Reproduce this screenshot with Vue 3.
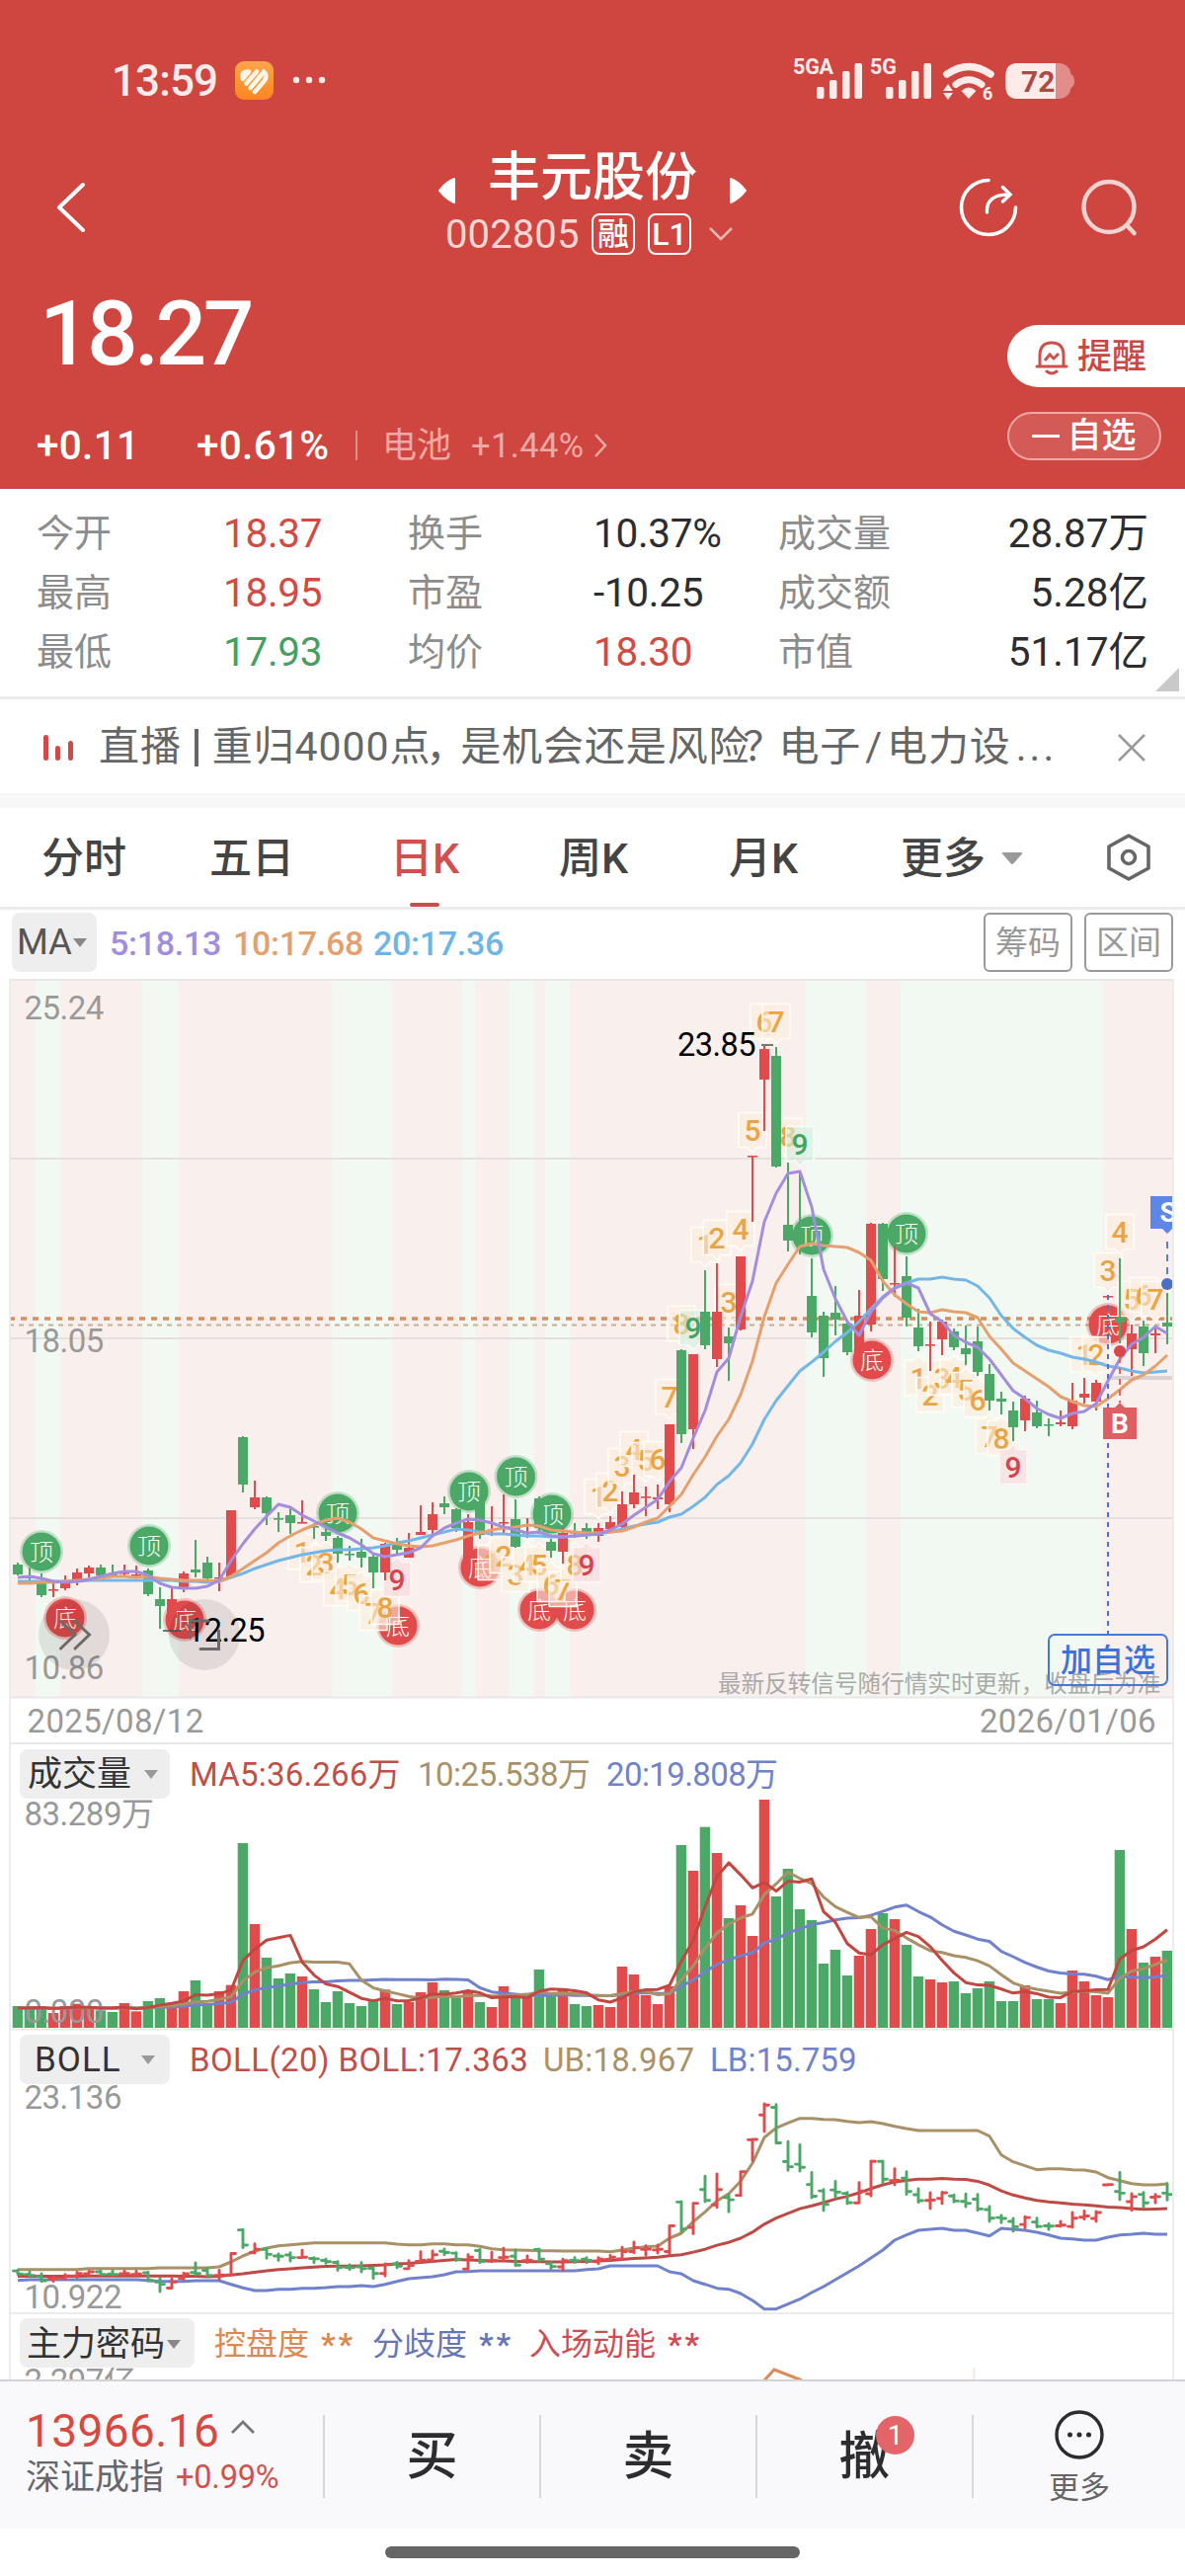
<script setup>
// Daily candles: [up/down, high, low, body top, body bottom, volume]
const raw = `G 1582 1595 1584 1594 66|G 1587 1600 1595 1598 63|G 1593 1617 1602 1615 63|R 1603 1617 1609 1610 45|R 1595 1610 1600 1608 66|R 1588 1605 1592 1600 73|R 1585 1597 1587 1593 63|G 1584 1595 1587 1595 53|G 1584 1597 1594 1595 48|R 1584 1597 1592 1593 75|R 1585 1598 1594 1595 50|G 1588 1616 1590 1614 81|G 1607 1649 1619 1626 90|R 1608 1638 1619 1638 75|R 1591 1612 1593 1608 111|G 1559 1597 1589 1592 144|G 1576 1600 1582 1598 75|R 1582 1611 1597 1598 111|R 1529 1597 1529 1597 130|G 1454 1511 1455 1503 561|R 1499 1528 1516 1526 315|G 1515 1544 1516 1532 213|G 1531 1551 1537 1538 150|G 1527 1553 1534 1542 165|R 1519 1542 1541 1542 156|G 1542 1558 1545 1546 117|G 1547 1560 1551 1555 78|G 1555 1582 1557 1573 111|G 1565 1580 1573 1574 75|G 1558 1587 1571 1577 66|G 1573 1608 1576 1592 81|R 1562 1600 1563 1592 116|G 1557 1574 1562 1569 72|R 1552 1577 1567 1577 78|R 1524 1554 1551 1554 108|R 1521 1553 1533 1549 138|G 1515 1533 1522 1526 114|G 1527 1551 1528 1547 90|R 1533 1577 1541 1578 111|G 1517 1558 1520 1554 78|R 1525 1555 1552 1553 63|R 1513 1552 1541 1542 126|G 1518 1567 1538 1566 93|R 1537 1557 1551 1552 96|G 1515 1553 1517 1547 177|G 1558 1577 1561 1570 96|R 1547 1583 1552 1571 120|G 1542 1557 1551 1552 72|G 1542 1558 1547 1551 66|R 1542 1561 1547 1555 69|R 1535 1550 1541 1548 63|R 1510 1547 1523 1546 186|R 1493 1527 1511 1523 162|R 1505 1535 1515 1516 99|R 1503 1528 1516 1518 72|R 1442 1531 1442 1523 126|G 1366 1461 1367 1452 555|R 1371 1467 1371 1447 477|G 1286 1366 1328 1362 610|R 1279 1384 1328 1376 531|G 1344 1398 1353 1360 333|R 1272 1347 1272 1346 372|R 1170 1237 1170 1171 279|R 1058 1145 1062 1093 693|G 1060 1182 1069 1181 399|G 1177 1267 1240 1256 483|G 1187 1270 1248 1258 360|G 1274 1354 1312 1349 327|G 1328 1394 1332 1375 195|G 1302 1352 1329 1336 237|G 1337 1372 1340 1369 159|R 1306 1370 1332 1370 219|R 1238 1348 1239 1341 300|G 1238 1307 1239 1295 348|R 1262 1313 1299 1300 330|G 1272 1343 1292 1334 252|G 1325 1368 1344 1363 156|R 1338 1388 1361 1362 147|R 1336 1372 1338 1356 138|G 1345 1367 1348 1364 141|G 1342 1382 1365 1371 105|G 1343 1393 1358 1389 120|G 1381 1428 1391 1418 141|G 1409 1432 1416 1419 81|G 1419 1459 1428 1445 81|R 1413 1449 1416 1438 129|G 1418 1446 1430 1444 87|G 1436 1454 1442 1443 87|R 1428 1444 1440 1442 75|R 1400 1447 1418 1444 174|R 1395 1421 1411 1415 141|R 1397 1428 1400 1419 99|R 1312 1313 1312 1313 93|G 1274 1360 1334 1339 540|R 1341 1393 1350 1366 300|G 1337 1383 1343 1370 198|R 1343 1370 1350 1352 216|G 1309 1361 1339 1343 234`
const X = i => 18 + 12 * i
const RED = '#e14b4b'
const GREEN = '#4ca866'
const candles = raw.split('|').map((r, i) => {
  const [c, ...n] = r.split(' ')
  const [h, l, t, b, v] = n.map(Number)
  return { x: X(i), red: c === 'R', color: c === 'R' ? RED : GREEN, h, l, t, b, v: v / 3, bh: Math.max(b - t, 1.6) }
})

const nums = s => s.trim().split(/\s+/).map(Number)
const line = (a, f = y => y) => a.map((y, i) => `${X(i)},${f(y).toFixed(1)}`).join(' ')

const ma5 = nums(`1597 1596 1598 1601 1602 1601 1599 1596 1593 1591 1591 1595 1603 1607 1608 1608 1606 1600 1580 1563 1548 1535 1523 1526 1534 1540 1546 1552 1557 1564 1573 1576 1574 1572 1567 1555 1547 1542 1538 1539 1542 1546 1549 1552 1551 1555 1556 1555 1554 1553 1549 1543 1534 1526 1518 1500 1486 1456 1428 1389 1375 1333 1297 1237 1208 1188 1186 1222 1285 1315 1338 1352 1328 1314 1304 1299 1304 1330 1338 1352 1359 1364 1376 1392 1408 1416 1426 1432 1436 1431 1429 1421 1398 1376 1361 1354 1343 1350`)
const ma10 = nums(`1603 1603 1602 1602 1601 1600 1599 1598 1596 1596 1597 1596 1598 1599 1600 1600 1600 1601 1596 1588 1580 1572 1562 1555 1549 1544 1539 1537 1541 1548 1557 1560 1563 1565 1566 1565 1562 1559 1555 1552 1549 1547 1546 1544 1545 1549 1550 1551 1552 1552 1551 1550 1546 1541 1537 1525 1513 1493 1475 1454 1437 1412 1378 1333 1299 1280 1262 1259 1261 1262 1263 1268 1276 1297 1311 1320 1328 1329 1326 1328 1329 1334 1353 1366 1380 1388 1396 1404 1414 1419 1423 1424 1416 1407 1397 1392 1383 1372`)
const ma20 = nums(`1601 1601 1601 1601 1601 1601 1600 1600 1600 1600 1600 1600 1600 1600 1601 1601 1602 1601 1597 1593 1588 1584 1580 1577 1574 1572 1570 1569 1569 1568 1567 1565 1562 1560 1557 1554 1551 1548 1549 1551 1553 1553 1554 1555 1555 1556 1556 1555 1554 1553 1551 1548 1545 1543 1541 1536 1533 1525 1516 1503 1494 1481 1462 1437 1418 1403 1388 1379 1369 1358 1349 1338 1325 1313 1304 1299 1295 1295 1293 1295 1296 1302 1314 1332 1345 1354 1362 1367 1370 1374 1376 1379 1383 1385 1388 1390 1389 1388`)
const ub = nums(`713 713 713 713 713 713 710 710 710 710 710 710 708 708 708 708 708 705 690 672 657 648 641 638 635 632 632 632 632 632 632 632 636 638 638 635 635 638 638 643 650 653 654 655 656 656 657 657 657 657 659 654 648 644 642 618 603 568 538 505 483 445 390 312 283 268 254 254 257 258 263 267 264 270 278 285 291 291 291 291 291 291 308 365 386 398 410 407 407 410 411 417 434 443 452 456 456 453`)
const lb = nums(`746 744 744 744 744 744 744 744 744 744 744 746 749 749 749 747 747 747 758 769 777 777 773 773 770 770 768 765 765 762 765 758 749 741 738 735 729 720 719 717 717 717 717 717 717 717 717 717 713 711 702 702 702 702 702 720 726 747 758 770 773 786 807 833 833 818 803 783 765 744 723 702 678 654 624 608 594 591 588 594 594 602 611 588 591 594 600 608 618 620 624 624 615 608 606 603 606 606`)

const by = y => 2130 + (y - 1058) * 0.3215
const bollY = v => 2060 + v / 3

const padded = [...Array(20).fill(19.5), ...candles.map(c => c.v)]
const volMa = n => candles.map((_, i) => {
  const w = padded.slice(i + 21 - n, i + 21)
  return 2053 - w.reduce((a, b) => a + b, 0) / n
})

const bands = [[36, 61], [144.5, 181], [336.5, 397], [468, 481], [516, 541], [552, 577], [816, 877], [912, 1117]]
const grid = [1173, 1355, 1537]

const signals = [
  ['顶', 42, 1571], ['顶', 151, 1565], ['顶', 342, 1532], ['顶', 475, 1510], ['顶', 522.5, 1495], ['顶', 559, 1533],
  ['顶', 822, 1251], ['顶', 918, 1249], ['底', 66, 1638], ['底', 187, 1640], ['底', 403, 1646], ['底', 486, 1587],
  ['底', 546, 1630], ['底', 582, 1630], ['底', 883, 1377], ['底', 1122, 1341]
]

// Sequence counts: [candle index, count, box centre y, side]
const tags = [
  [24, 1, 1571, 'b'], [25, 2, 1584, 'b'], [26, 3, 1582, 'b'], [27, 4, 1608, 'b'], [28, 5, 1604, 'b'], [29, 6, 1613, 'b'], [30, 7, 1633, 'b'], [31, 8, 1627, 'b'], [32, 9, 1599, 'b'],
  [40, 1, 1582, 'b'], [41, 2, 1575, 'b'], [42, 3, 1594, 'b'], [43, 4, 1584, 'b'], [44, 5, 1584, 'b'], [45, 6, 1604, 'b'], [46, 7, 1609, 'b'], [47, 8, 1584, 'b'], [48, 9, 1584, 'b'],
  [49, 1, 1515, 't'], [50, 2, 1509, 't'], [51, 3, 1484, 't'], [52, 4, 1467, 't'], [53, 5, 1478, 't'], [54, 6, 1477, 't'], [55, 7, 1414, 't'], [56, 8, 1340, 't'], [57, 9, 1344, 't'],
  [58, 1, 1260, 't'], [59, 2, 1253, 't'], [60, 3, 1318, 't'], [61, 4, 1244, 't'], [62, 5, 1144, 't'], [63, 6, 1034, 't'], [64, 7, 1034, 't'], [65, 8, 1150, 't'], [66, 9, 1158, 't'],
  [76, 1, 1395, 'b'], [77, 2, 1412, 'b'], [78, 3, 1395, 'b'], [79, 4, 1394, 'b'], [80, 5, 1407, 'b'], [81, 6, 1417, 'b'], [82, 7, 1454, 'b'], [83, 8, 1456, 'b'], [84, 9, 1485, 'b'],
  [90, 1, 1371, 't'], [91, 2, 1371, 't'], [92, 3, 1286, 't'], [93, 4, 1247, 't'], [94, 5, 1315, 't'], [95, 6, 1311, 't'], [96, 7, 1315, 't']
].map(([i, n, y, side]) => ({
  x: X(i), n, y,
  kind: n === 9 ? (side === 't' ? 'tag-green' : 'tag-red') : 'tag-orange',
  d: side === 't'
    ? 'M-14,-17.5 H14 V17.5 H5 L0,22.5 L-5,17.5 H-14 Z'
    : 'M-14,-17.5 H-5 L0,-22.5 L5,-17.5 H14 V17.5 H-14 Z'
}))

const stats = [
  ['今开', '18.37', 'up'], ['换手', '10.37%', ''], ['成交量', '28.87万', ''],
  ['最高', '18.95', 'up'], ['市盈', '-10.25', ''], ['成交额', '5.28亿', ''],
  ['最低', '17.93', 'down'], ['均价', '18.30', 'up'], ['市值', '51.17亿', '']
]
const tabs = ['分时', '五日', '日K', '周K', '月K']
</script>

<template>
  <div class="page">
    <header class="hero">
      <div class="status">
        <span class="clock">13:59</span>
        <svg class="app-ico" width="39" height="39" viewBox="0 0 39 39">
          <defs><linearGradient id="og" x1="0" y1="0" x2="0" y2="1"><stop offset="0" stop-color="#fda54b" /><stop offset="1" stop-color="#fb861f" /></linearGradient></defs>
          <rect width="39" height="39" rx="9" fill="url(#og)" />
          <g fill="none" stroke="#fff6e8" stroke-width="4.600" stroke-linecap="round" stroke-linejoin="round">
            <path d="M8 18 Q5.500 10 14 10.500 L9 16.500" /><path d="M11.500 22.500 L22 10.500" /><path d="M15.500 27 L27 13.500" /><path d="M20 31 L29.500 20 Q33.500 14 29 10.500" />
          </g>
        </svg>
        <svg class="dots" width="34" height="8" viewBox="0 0 34 8" fill="#fde9e7"><circle cx="4" cy="4" r="3.2" /><circle cx="17" cy="4" r="3.2" /><circle cx="30" cy="4" r="3.2" /></svg>
        <svg class="net" width="290" height="50" viewBox="802 55 290 50" fill="#fdebea">
          <text x="804" y="74" class="net-t">5GA</text>
          <rect x="828" y="87" width="7.5" height="12" rx="2" /><rect x="841" y="80" width="7.5" height="19" rx="2" /><rect x="854" y="71" width="7.5" height="28" rx="2" /><rect x="866.5" y="63" width="7.5" height="36" rx="2" />
          <text x="882" y="74" class="net-t">5G</text>
          <rect x="898" y="87" width="7.5" height="12" rx="2" /><rect x="911" y="80" width="7.5" height="19" rx="2" /><rect x="924" y="71" width="7.5" height="28" rx="2" /><rect x="936.5" y="63" width="7.5" height="36" rx="2" />
          <path d="M960 74 Q982 59 1004 74" fill="none" stroke="#fdebea" stroke-width="7.5" stroke-linecap="round" />
          <path d="M969 84.500 Q982 75 995 84.500" fill="none" stroke="#fdebea" stroke-width="7" stroke-linecap="round" />
          <path d="M974.500 91 Q982 84 989.500 91 L982 99 Z" />
          <path d="M956 91 L961 84 L966 91 Z M956 93 L961 100 L966 93 Z" />
          <text x="996" y="99.500" class="wifi-t">6</text>
          <rect x="1019.500" y="63" width="66" height="36" rx="12" fill="#e28d89" />
          <path d="M1085 74 q4 1 4 7 q0 6 -4 7 z" fill="#e28d89" />
          <path d="M1031.500 63 H1070 V99 H1031.500 Q1019.500 99 1019.500 87 V75 Q1019.500 63 1031.500 63 Z" />
          <text x="1035" y="92" class="bat-t">72</text>
        </svg>
      </div>

      <div class="nav">
        <svg class="back" width="34" height="52" viewBox="0 0 34 52"><path d="M29 3 L5 26 L29 49" fill="none" stroke="#fff" stroke-width="4" stroke-linecap="round" stroke-linejoin="round" /></svg>
        <div class="title">
          <div class="name">
            <svg width="20" height="28" viewBox="0 0 20 28"><path d="M17 2 V26 Q9 23 2 14 Q9 5 17 2 Z" fill="#fff" stroke="#fff" stroke-width="2" stroke-linejoin="round" /></svg>
            <h1>丰元股份</h1>
            <svg width="20" height="28" viewBox="0 0 20 28"><path d="M3 2 V26 Q11 23 18 14 Q11 5 3 2 Z" fill="#fff" stroke="#fff" stroke-width="2" stroke-linejoin="round" /></svg>
          </div>
          <div class="code">
            <span>002805</span><i>融</i><i class="l1">L1</i>
            <svg width="26" height="16" viewBox="0 0 26 16"><path d="M2 2 L13 13 L24 2" fill="none" stroke="#f2b8b4" stroke-width="2.500" /></svg>
          </div>
        </div>
        <svg class="tools" width="190" height="66" viewBox="970 178 190 66" fill="none" stroke-linecap="round">
          <path d="M1001 182.500 A27.500 27.500 0 1 0 1028.500 210" stroke="#fff" stroke-width="3.600" />
          <path d="M999.500 215 V213 Q999.500 197 1022 197 M1015.500 189.500 L1023 197 L1015.500 204" stroke="#fff" stroke-width="3.400" />
          <circle cx="1123" cy="209.500" r="25.500" stroke="#f3d3d1" stroke-width="4.500" />
          <path d="M1141 228 L1148.500 236" stroke="#f3d3d1" stroke-width="4.500" />
        </svg>
      </div>

      <div class="quote">
        <div class="last">18.27</div>
        <button class="remind">
          <svg width="36" height="36" viewBox="0 0 36 36" fill="none" stroke="#cf4f4a" stroke-width="3"><path d="M3 27 H33 M6 27 V16 Q6 3 18 3 Q30 3 30 16 V27" stroke-linecap="round" /><path d="M11 21 L16 15 L20 19 L25 14" /><path d="M13 32 Q18 36 23 32" stroke-linecap="round" /></svg>
          <span>提醒</span>
        </button>
      </div>
      <div class="delta">
        <span class="d1">+0.11</span><span class="d2">+0.61%</span><b></b><span class="d3">电池</span><span class="d4">+1.44%</span>
        <svg width="16" height="26" viewBox="0 0 16 26"><path d="M3 2 L13 13 L3 24" fill="none" stroke="#efa9a5" stroke-width="2.500" /></svg>
        <button class="fav"><em></em>自选</button>
      </div>
    </header>

    <section class="stats">
      <template v-for="(s, i) in stats" :key="i">
        <span class="k">{{ s[0] }}</span><span class="v" :class="[s[2], { end: i % 3 === 2 }]">{{ s[1] }}</span>
      </template>
      <svg class="corner" width="24" height="24" viewBox="0 0 24 24"><path d="M24 0 V24 H0 Z" fill="#c9c9c9" /></svg>
    </section>

    <section class="news">
      <svg width="34" height="30" viewBox="0 0 34 30" fill="#cf4a48"><rect x="1" y="2" width="5" height="26" rx="2.500" /><rect x="13" y="13" width="5" height="15" rx="2.500" /><rect x="26" y="8" width="5" height="20" rx="2.500" /></svg>
      <p>直播<i></i>重归4000点<span class="comma">，</span>是机会还是风险<span class="ques">？</span>电子<span class="sl">/</span>电力设<span class="el">...</span></p>
      <svg class="x" width="30" height="30" viewBox="0 0 30 30"><path d="M2 2 L28 28 M28 2 L2 28" stroke="#999" stroke-width="2.600" /></svg>
    </section>

    <nav class="tabs">
      <a v-for="t in tabs" :key="t" :class="{ on: t === '日K' }">{{ t }}</a>
      <a>更多<svg width="22" height="14" viewBox="0 0 22 14"><path d="M2 1 H20 Q22 1 20.500 3 L12.500 12 Q11 14 9.500 12 L1.500 3 Q0 1 2 1Z" fill="#999" /></svg></a>
      <svg class="hex" width="46" height="50" viewBox="0 0 46 50" fill="none" stroke="#666" stroke-width="3.600" stroke-linejoin="round"><path d="M23 3 L43 14 V36 L23 47 L3 36 V14 Z" /><circle cx="23" cy="25" r="6.500" /></svg>
    </nav>

    <div class="ma">
      <span class="pill">MA<svg width="14" height="9" viewBox="0 0 14 9"><path d="M0 0 H14 L7 9 Z" fill="#888" /></svg></span>
      <span class="m5">5:18.13</span><span class="m10">10:17.68</span><span class="m20">20:17.36</span>
      <button>筹码</button><button>区间</button>
    </div>

    <main class="frame">
      <svg class="price" width="1176" height="775" viewBox="11 991 1176 775">
        <rect x="11" y="991" width="1176" height="727" fill="#f9f0ee" />
        <rect v-for="b in bands" :key="b[0]" :x="b[0]" y="991" :width="b[1] - b[0]" height="727" fill="#f2f9f2" />
        <path v-for="g in grid" :key="g" :d="`M11 ${g} H1187`" stroke="#e5e0de" stroke-width="2" />
        <path d="M11 992 H1187 M11 1718.500 H1187 M11 1765 H1187" stroke="#e9e8e7" stroke-width="2" />
        <g class="axis">
          <text x="24.500" y="1032">25.24</text><text x="24.500" y="1369">18.05</text><text x="24.500" y="1700">10.86</text>
          <text class="date" x="27.500" y="1754">2025/08/12</text><text class="date" x="1171" y="1754" text-anchor="end">2026/01/06</text>
        </g>
        <path d="M9 1341.500 H1187" stroke="#c8b08d" stroke-width="2" stroke-dasharray="5 5" />
        <path d="M9 1335 H1187" stroke="#da8c5a" stroke-width="3.600" stroke-dasharray="6 6" />

        <g v-for="(s, i) in signals" :key="'s' + i" :transform="`translate(${s[1]} ${s[2]})`">
          <circle r="22" :fill="s[0] === '顶' ? GREEN : RED" opacity=".3" />
          <circle r="19.500" :fill="s[0] === '顶' ? GREEN : RED" />
          <text class="sig" y="8.500" text-anchor="middle">{{ s[0] }}</text>
        </g>
        <g v-for="(t, i) in tags" :key="'t' + i" :class="t.kind" :transform="`translate(${t.x} ${t.y})`">
          <path :d="t.d" /><text y="11" text-anchor="middle">{{ t.n }}</text>
        </g>
        <g v-for="(c, i) in candles" :key="'c' + i" :fill="c.color">
          <rect :x="c.x - 1" :y="c.h" width="2" :height="c.l - c.h" /><rect :x="c.x - 5" :y="c.t" width="10" :height="c.bh" />
        </g>

        <path d="M1123 1395 H1187" stroke="#d9d4d3" stroke-width="4" />
        <g fill="none" stroke-width="3" stroke-linejoin="round">
          <polyline :points="line(ma20)" stroke="#74b7e6" /><polyline :points="line(ma10)" stroke="#e6a06e" /><polyline :points="line(ma5)" stroke="#a28edd" />
        </g>

        <path d="M1122 1311 V1654" stroke="#4a74cf" stroke-width="2" stroke-dasharray="5 5" />
        <path d="M1134 1374 V1420" stroke="#d66" stroke-width="2" stroke-dasharray="6 5" />
        <circle cx="1134" cy="1368" r="6" fill="#d9454a" />
        <path d="M1117 1425 H1129 L1134 1420 L1139 1425 H1151 V1457 H1117 Z" fill="#de5e61" /><text class="flag" x="1134" y="1450.500" text-anchor="middle">B</text>
        <path d="M1182 1257 V1296" stroke="#5a7fd4" stroke-width="2" stroke-dasharray="7 6" />
        <circle cx="1182" cy="1300" r="6" fill="#4a6fc4" />
        <path d="M1165 1211 H1199 V1244 H1187 L1182 1249 L1177 1244 H1165 Z" fill="#5d86e6" /><text class="flag" x="1183" y="1237" text-anchor="middle">S</text>

        <path d="M165 1651 H183" stroke="#555" stroke-width="1.600" /><path d="M771 1058 H783" stroke="#777" stroke-width="2" />
        <text class="mark" x="189" y="1661.500">12.25</text><text class="mark" x="686" y="1068.500">23.85</text>

        <circle cx="75" cy="1655" r="36" fill="#000" opacity=".09" /><circle cx="207" cy="1655" r="36" fill="#000" opacity=".09" />
        <g fill="none" stroke="#6d6a69" stroke-width="3" stroke-linecap="round">
          <path d="M61.500 1641.500 L76 1655 L61.500 1669 M76 1641.500 L90.500 1655 L76 1669" />
          <path d="M192.500 1658 V1641 H211 M221.500 1651 V1669.500 H203" />
        </g>
        <text class="note" x="727" y="1712.500">最新反转信号随行情实时更新，收盘后为准</text>
        <rect x="1062" y="1655" width="120" height="51" rx="6" fill="none" stroke="#4478db" stroke-width="2" />
        <text class="add" x="1122" y="1692" text-anchor="middle">加自选</text>
      </svg>

      <div class="ind">
        <span class="pill wide">成交量<svg width="14" height="9" viewBox="0 0 14 9"><path d="M0 0 H14 L7 9 Z" fill="#999" /></svg></span>
        <span class="c-red a1">MA5:36.266万</span><span class="c-tan a2">10:25.538万</span><span class="c-blue a3">20:19.808万</span>
      </div>
      <svg width="1176" height="235" viewBox="11 1821 1176 235">
        <rect v-for="(c, i) in candles" :key="i" :x="c.x - 5.300" :y="2053 - c.v" width="10.400" :height="c.v" :fill="c.color" />
        <path d="M11 2054.500 H1187" stroke="#e3ede4" stroke-width="2" />
        <g class="axis"><text x="24.500" y="1848">83.289万</text><text x="24.500" y="2048">0.000</text></g>
        <g fill="none" stroke-width="3" stroke-linejoin="round">
          <polyline :points="line(volMa(20))" stroke="#6f82cb" /><polyline :points="line(volMa(10))" stroke="#a99167" /><polyline :points="line(volMa(5))" stroke="#c24740" />
        </g>
      </svg>

      <div class="ind low">
        <span class="pill wide boll">BOLL<svg width="14" height="9" viewBox="0 0 14 9"><path d="M0 0 H14 L7 9 Z" fill="#999" /></svg></span>
        <span class="c-red b1">BOLL(20) BOLL:17.363</span><span class="c-tan b2">UB:18.967</span><span class="c-blue b3">LB:15.759</span>
      </div>
      <svg width="1176" height="234" viewBox="11 2109 1176 234">
        <g class="axis"><text x="24.500" y="2135">23.136</text><text x="24.500" y="2336.500">10.922</text></g>
        <g fill="none" stroke-width="3" stroke-linejoin="round">
          <polyline :points="line(lb, bollY)" stroke="#6f82cb" /><polyline :points="line(ub, bollY)" stroke="#a99167" /><polyline :points="line(ma20, by)" stroke="#be4a45" />
        </g>
        <g fill="none" stroke-width="2.900" stroke-linecap="round">
          <path v-for="(c, i) in candles" :key="i" :stroke="c.color" :d="`M${c.x} ${by(c.h)} V${by(c.l)} M${c.x - 4.500} ${by(c.red ? c.b : c.t)} H${c.x} M${c.x} ${by(c.red ? c.t : c.b)} H${c.x + 4.500}`" />
        </g>
        <path d="M11 2342 H1187" stroke="#ececec" stroke-width="2" />
      </svg>

      <div class="ind main-force">
        <span class="pill force">主力密码<svg width="14" height="9" viewBox="0 0 14 9"><path d="M0 0 H14 L7 9 Z" fill="#888" /></svg></span>
        <span class="c-org f1">控盘度 <b>**</b></span><span class="c-blu2 f2">分歧度 <b>**</b></span><span class="c-red2 f3">入场动能 <b>**</b></span>
      </div>
      <svg width="1176" height="12" viewBox="11 2397 1176 12">
        <g class="axis"><text x="24.500" y="2422">2.297亿</text></g>
        <path d="M774 2410 L784 2399 L812 2410" fill="none" stroke="#dd8a55" stroke-width="3" />
        <path d="M986.500 2397 V2409" stroke="#fbe6e4" stroke-width="2" />
      </svg>
    </main>

    <footer class="dock">
      <div class="index">
        <div class="pt">13966.16<svg width="26" height="16" viewBox="0 0 26 16"><path d="M2 14 L13 3 L24 14" fill="none" stroke="#777" stroke-width="2.800" /></svg></div>
        <div class="nm">深证成指<span>+0.99%</span></div>
      </div>
      <div class="act">买</div>
      <div class="act">卖</div>
      <div class="act">撤<sup>1</sup></div>
      <div class="more">
        <svg width="52" height="52" viewBox="0 0 52 52"><circle cx="26" cy="26" r="23" fill="none" stroke="#2c2c2e" stroke-width="3.400" /><circle cx="16.500" cy="26" r="2.500" fill="#2c2c2e" /><circle cx="26" cy="26" r="2.500" fill="#2c2c2e" /><circle cx="35.500" cy="26" r="2.500" fill="#2c2c2e" /></svg>
        <span>更多</span>
      </div>
    </footer>
    <div class="home"><i></i></div>
  </div>
</template>

<style>
body { margin: 0; background: #fff; }
</style>

<style scoped>
.page { width: 1200px; height: 2608px; overflow: hidden; background: #fff; font-family: Roboto, "Noto Sans CJK SC", sans-serif; color: #2d2d2f; line-height: 1; white-space: nowrap; }
.page * { box-sizing: border-box; }
svg { display: block; flex: none; }
button { font: inherit; margin: 0; padding: 0; }
i, em { font-style: normal; }

.hero { height: 495px; background: #cf453f; color: #fff; display: flex; flex-direction: column; }
.status { height: 112px; padding: 50px 0 0 113px; display: flex; align-items: center; color: #fdebea; }
.clock { font-size: 44px; letter-spacing: -.9px; width: 125px; font-weight: 500; padding-top: 2px; }
.dots { margin-left: 19px; }
.net { margin-left: 471px; }
.net-t { font-size: 21.500px; font-weight: 700; letter-spacing: -.2px; }
.wifi-t { font-size: 18px; font-weight: 700; }
.bat-t { font-size: 30px; font-weight: 700; fill: #ad4a46; }

.nav { height: 168px; display: flex; padding-left: 54px; }
.back { margin: 72px 0 0 1px; }
.title { width: 340px; margin-left: 342px; }
.name { display: flex; justify-content: center; align-items: flex-end; margin-top: 36px; height: 60px; gap: 31px; position: relative; left: -1px; }
.name h1 { margin: 0; font-size: 53px; font-weight: 500; line-height: 60px; padding-top: 2px; height: 60px; }
.name svg { margin-bottom: 1px; }
.code { display: flex; align-items: center; height: 44px; margin: 7px 0 0 20px; color: #fbd6d3; font-size: 40px; }
.code span { width: 148px; letter-spacing: .1px; padding-top: 2px; }
.code i { width: 44px; height: 42px; border: 2px solid #fff; border-radius: 8px; margin-right: 13px; color: #fff; font-size: 32px; line-height: 38px; text-align: center; font-weight: 500; }
.code svg { margin-left: 4px; }
.tools { margin: 66px 0 0 199px; }

.quote { height: 113px; display: flex; justify-content: space-between; }
.last { font-size: 91px; font-weight: 500; letter-spacing: -3.700px; padding: 13px 0 0 40px; }
.remind { margin-top: 49px; width: 180px; height: 63px; border: 0; border-radius: 32px 0 0 32px; background: #fff; color: #c94843; font-size: 35px; font-weight: 500; display: flex; align-items: center; gap: 8px; padding: 2px 0 0 27px; }
.delta { display: flex; align-items: center; height: 100px; padding: 16px 0 0 37px; font-size: 40.500px; font-weight: 500; letter-spacing: .3px; }
.d1 { width: 162px; }
.d2 { width: 161px; }
.delta b { width: 2px; height: 30px; background: #e08c88; }
.d3 { color: #efa9a5; font-size: 35px; font-weight: 400; width: 90px; margin-left: 25px; letter-spacing: 0; }
.d4 { color: #efa9a5; font-size: 34.500px; width: 123px; font-weight: 400; letter-spacing: .4px; }
.fav { margin: -19px 0 0 404px; width: 156px; height: 49px; border: 2px solid #eca9a6; border-radius: 25px; background: #d45a55; color: #fff; font-size: 35px; font-weight: 500; display: flex; align-items: center; justify-content: center; gap: 7px; letter-spacing: 0; }
.fav em { width: 28px; height: 3.500px; background: #fff; }

.stats { position: relative; height: 213px; border-bottom: 3px solid #ebebeb; display: grid; grid-template-columns: 189px 187px 188px 187px 140px 235px; grid-auto-rows: 60px; align-items: center; padding: 15px 0 0 37px; font-size: 40.500px; }
.k { color: #8c8c8c; font-size: 38px; }
.v { letter-spacing: -.3px; color: #2d2d2f; }
.v.up { color: #d24a42; }
.v.down { color: #479f5f; }
.v.end { text-align: right; letter-spacing: 0; }
.corner { position: absolute; right: 6px; top: 181px; }

.news { height: 95px; display: flex; align-items: center; padding: 2px 0 0 43px; font-size: 41px; color: #666; }
.news p { margin: 0 0 0 23px; width: 1031px; letter-spacing: .9px; display: flex; align-items: center; }
.news p i { width: 4px; height: 38px; background: #666; margin: 0 14px 0 13px; }
.comma { margin: 0 -7px 0 -5px; }
.ques { margin: 0 -6px 0 -7px; }
.sl { margin: 0 4px 0 4px; }
.el { letter-spacing: 3px; margin-left: 5px; }

.tabs { height: 118px; border-top: 15px solid #f7f7f7; border-bottom: 3px solid #ebebeb; display: grid; grid-template-columns: 170px 184px 170px 172px 174px 208px 46px; padding-left: 42px; align-items: center; font-size: 43px; font-weight: 500; color: #444; }
.tabs a { display: flex; align-items: center; height: 100px; position: relative; padding-top: 2px; }
.tabs a svg { margin-left: 16px; }
.tabs .on { color: #d34f4f; left: -1px; }
.tabs .on::after { content: ""; position: absolute; left: 20px; bottom: 0; width: 30px; height: 4px; border-radius: 2px; background: #c94d50; }

.ma { height: 70px; display: flex; align-items: center; padding: 0 12px 4px 12px; font-size: 34px; letter-spacing: -.3px; }
.pill { background: #eee; border-radius: 8px; height: 60px; display: flex; align-items: center; gap: 2px; color: #555; }
.ma .pill { width: 86px; padding-left: 5px; font-size: 36.500px; }
.m5 { margin-left: 13px; width: 125px; color: #a28ddd; font-weight: 500; padding-top: 2px; }
.m10 { width: 142px; color: #e3a06f; font-weight: 500; padding-top: 2px; }
.m20 { color: #6eb5e6; margin-right: auto; font-weight: 500; padding-top: 2px; }
.ma button { width: 90px; height: 60px; margin-left: 12px; border: 2px solid #999; border-radius: 6px; background: #fff; color: #999; font-size: 33px; letter-spacing: 0; }

.frame { margin: 0 11px 0 9px; width: 1180px; border: solid #ececec; border-width: 0 2px; }
.axis { fill: #999; font-size: 33px; letter-spacing: -.5px; }
.date { letter-spacing: .35px; }
.sig { font-size: 24px; fill: #f4fff4; font-weight: 300; }
.tag-orange path { fill: #fbecdc; stroke: #fffdf6; }
.tag-red path { fill: #f8d6da; stroke: #fff6f5; }
.tag-green path { fill: #d2eddf; stroke: #f4fff8; }
.tag-orange path, .tag-red path, .tag-green path { fill-opacity: .58; stroke-width: 1.500; stroke-linejoin: round; }
.tag-orange text, .tag-red text, .tag-green text { font-size: 30px; font-weight: 500; }
.tag-orange text { fill: #e9a545; }
.tag-red text { fill: #d8434c; }
.tag-green text { fill: #44a562; }
.flag { font-size: 28px; font-weight: 700; fill: #fff; }
.mark { font-size: 32.500px; fill: #000; letter-spacing: -.5px; }
.note { font-size: 23.600px; fill: #a9a9a9; }
.add { font-size: 32px; fill: #3f70db; font-weight: 500; }

.ind { height: 55px; display: flex; align-items: center; padding-left: 9px; font-size: 33px; }
.ind > span { padding-top: 5px; }
.low { height: 53px; }
.main-force { height: 54px; }
.ind .pill { height: 50px; margin-top: 4px; color: #333; font-size: 35px; padding-top: 2px; }
.wide { width: 152px; padding-left: 8px; justify-content: flex-start; }
.wide svg { margin-left: 11px; }
.boll { padding-left: 15px; letter-spacing: 1px; }
.boll svg { margin-left: 18px; }
.a1, .b1 { margin-left: 20px; }
.a1 { width: 231px; letter-spacing: .2px; }
.a2 { width: 191px; letter-spacing: -.5px; }
.a3 { letter-spacing: -.6px; }
.b1 { width: 358px; letter-spacing: .4px; }
.b2 { width: 169px; letter-spacing: .2px; }
.b3 { letter-spacing: .1px; }
.c-red { color: #c24e48; }
.c-tan { color: #a8926a; }
.c-blue { color: #7083ca; }
.force { width: 177px; padding-left: 7px; }
.ind b { font-weight: 700; letter-spacing: 3px; margin-left: 4px; }
.f1 { margin-left: 20px; width: 160px; color: #dd8752; font-size: 32px; }
.f2 { width: 159px; color: #6575b7; font-size: 32px; }
.f3 { color: #d24b52; font-size: 32px; }

.dock { height: 151px; background: #f9f9fc; border-top: 2px solid #d3d3d7; display: flex; align-items: center; }
.index { width: 327px; padding-left: 26px; margin-top: -8px; }
.pt { font-size: 46px; color: #d84a41; display: flex; align-items: center; gap: 11px; height: 48px; letter-spacing: .4px; }
.pt svg { margin-bottom: 8px; }
.nm { color: #66666c; font-size: 35px; margin-top: 6px; display: flex; align-items: center; height: 36px; }
.nm span { color: #d4504a; font-size: 32.500px; margin-left: 12px; letter-spacing: -.2px; }
.act { position: relative; width: 219px; height: 84px; border-left: 2px solid #d8d8dc; font-size: 52px; font-weight: 500; line-height: 86px; text-align: center; margin-bottom: -2px; }
.act sup { position: absolute; left: 120px; top: 1px; width: 39px; height: 39px; border-radius: 50%; background: #e46569; color: #fff; font-size: 28px; line-height: 39px; font-weight: 400; }
.more { width: 216px; height: 84px; border-left: 2px solid #d8d8dc; display: flex; flex-direction: column; align-items: center; justify-content: space-between; margin-bottom: -2px; }
.more svg { margin-top: -6px; }
.more span { font-size: 31px; color: #666; margin-bottom: -5px; }
.home { height: 48px; display: flex; justify-content: center; align-items: center; }
.home i { width: 420px; height: 12px; border-radius: 6px; background: #666; }
</style>
